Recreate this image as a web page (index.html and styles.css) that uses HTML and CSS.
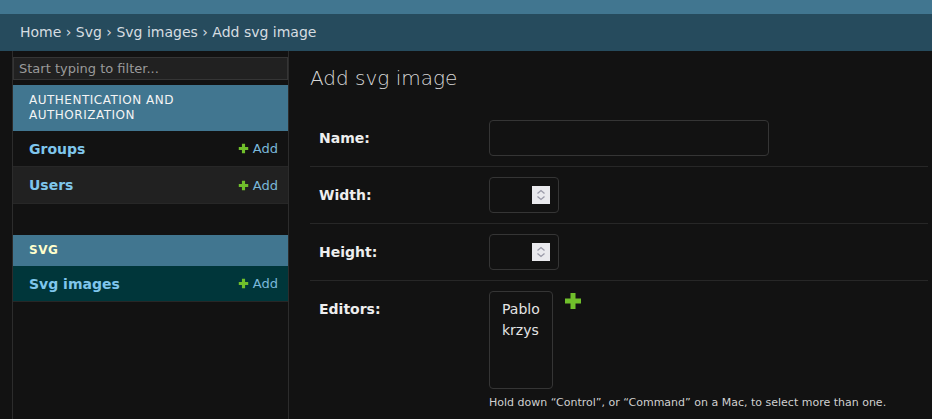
FILE: index.html
```html
<!DOCTYPE html>
<html lang="en">
<head>
<meta charset="utf-8">
<title>Add svg image</title>
<link rel="stylesheet" href="styles.css">
</head>
<body>
<div class="header"></div>
<nav class="breadcrumbs">
  <a href="#">Home</a> › <a href="#">Svg</a> › <a href="#">Svg images</a> › Add svg image
</nav>
<div class="main">
  <aside class="sidebar">
    <div class="filter"><span class="placeholder">Start typing to filter...</span></div>
    <div class="module">
      <div class="caption">Authentication and Authorization</div>
      <div class="row">
        <a class="model" href="#">Groups</a>
        <a class="add" href="#"><svg class="plus-s" viewBox="0 0 14 14"><path d="M5 1h4v4h4v4H9v4H5V9H1V5h4z" fill="#70bf2b"/></svg>Add</a>
      </div>
      <div class="row alt">
        <a class="model" href="#">Users</a>
        <a class="add" href="#"><svg class="plus-s" viewBox="0 0 14 14"><path d="M5 1h4v4h4v4H9v4H5V9H1V5h4z" fill="#70bf2b"/></svg>Add</a>
      </div>
    </div>
    <div class="module current">
      <div class="caption">SVG</div>
      <div class="row selected">
        <a class="model" href="#">Svg images</a>
        <a class="add" href="#"><svg class="plus-s" viewBox="0 0 14 14"><path d="M5 1h4v4h4v4H9v4H5V9H1V5h4z" fill="#70bf2b"/></svg>Add</a>
      </div>
    </div>
  </aside>
  <section class="content">
    <h1>Add svg image</h1>
    <div class="fieldset">
      <div class="form-row">
        <label>Name:</label>
        <div class="field"><div class="input text"></div></div>
      </div>
      <div class="form-row">
        <label>Width:</label>
        <div class="field"><div class="input number"><span class="spin"><svg viewBox="0 0 18 18"><path d="M5.5 7.5L9 4.5l3.5 3M5.5 10.5L9 13.5l3.5-3" fill="none" stroke="#9a9aa8" stroke-width="1.3"/></svg></span></div></div>
      </div>
      <div class="form-row">
        <label>Height:</label>
        <div class="field"><div class="input number"><span class="spin"><svg viewBox="0 0 18 18"><path d="M5.5 7.5L9 4.5l3.5 3M5.5 10.5L9 13.5l3.5-3" fill="none" stroke="#9a9aa8" stroke-width="1.3"/></svg></span></div></div>
      </div>
      <div class="form-row last">
        <label>Editors:</label>
        <div class="field">
          <div class="select-line">
            <div class="select"><div class="opt">Pablo</div><div class="opt">krzys</div></div>
            <svg class="plus-l" viewBox="0 0 16 16"><path d="M5.5 0h5v5.5H16v5h-5.5V16h-5v-5.5H0v-5h5.5z" fill="#70bf2b"/></svg>
          </div>
          <div class="help">Hold down “Control”, or “Command” on a Mac, to select more than one.</div>
        </div>
      </div>
    </div>
  </section>
</div>
</body>
</html>
```
FILE: styles.css
```css
html, body {
  margin: 0;
  padding: 0;
  background: #121212;
  color: #eeeeee;
  font-family: "DejaVu Sans", sans-serif;
}
a { text-decoration: none; color: inherit; }

.header {
  height: 14px;
  background: #417690;
}
.breadcrumbs {
  height: 37px;
  box-sizing: border-box;
  padding: 10px 20px 0 20px;
  background: #264b5d;
  color: #d6dde1;
  font-size: 14px;
  line-height: 17px;
}

.main {
  display: flex;
  min-height: calc(100vh - 51px);
}
.sidebar {
  margin-left: 12px;
  width: 275px;
  flex: none;
  border-left: 1px solid #2c2c2c;
  border-right: 1px solid #2c2c2c;
  padding-top: 6px;
}
.filter {
  height: 23px;
  box-sizing: border-box;
  border: 1px solid #353535;
  background: #212121;
  padding: 3px 5px;
  font-size: 13px;
  line-height: 15px;
  color: #9a9a9a;
  margin-bottom: 5px;
}
.module { margin-bottom: 31px; }
.caption {
  background: #417690;
  color: #f4f4f4;
  text-transform: uppercase;
  font-size: 12px;
  letter-spacing: 0.5px;
  line-height: 15px;
  padding: 8px 16px;
}
.current .caption {
  color: #ffffcc;
  font-weight: bold;
}
.row {
  height: 36px;
  box-sizing: border-box;
  border-bottom: 1px solid #272727;
  display: flex;
  align-items: center;
  justify-content: space-between;
  padding: 0 10px 0 16px;
}
.row.alt { background: #212121; height: 37px; }
.row.selected { background: #00363a; }
.model {
  color: #7fc6ec;
  font-weight: bold;
  font-size: 14px;
}
.add {
  color: #7ab8da;
  font-size: 13px;
  display: flex;
  align-items: center;
  gap: 4px;
}
.plus-s { width: 11px; height: 11px; }

.content {
  flex: 1;
  padding: 0 4px 0 21px;
}
h1 {
  margin: 15px 0 20px 0;
  font-size: 20px;
  line-height: 24px;
  font-weight: 300;
  color: #d8d8d8;
}
.form-row {
  display: flex;
  padding: 10px 9px;
  border-bottom: 1px solid #272727;
}
.form-row.last { border-bottom: none; }
label {
  width: 170px;
  flex: none;
  font-weight: bold;
  font-size: 14px;
  line-height: 20px;
  padding-top: 8px;
  color: #eeeeee;
}
.input {
  height: 36px;
  box-sizing: border-box;
  border: 1px solid #353535;
  border-radius: 4px;
  background: #121212;
}
.input.text { width: 280px; }
.input.number {
  width: 70px;
  display: flex;
  align-items: center;
  justify-content: flex-end;
  padding-right: 8px;
}
.spin {
  width: 18px;
  height: 18px;
  background: #e9e9ed;
  display: block;
}
.spin svg { width: 18px; height: 18px; display: block; }
.select-line {
  display: flex;
  align-items: flex-start;
  gap: 12px;
}
.select {
  width: 64px;
  height: 98px;
  box-sizing: border-box;
  border: 1px solid #353535;
  border-radius: 4px;
  padding: 7px 0 0 12px;
  font-size: 14px;
  line-height: 21px;
  color: #e4e4e4;
}
.plus-l { width: 16px; height: 16px; margin-top: 2px; }
.help {
  margin-top: 7px;
  font-size: 11px;
  line-height: 13px;
  color: #d0d0d0;
}
```
